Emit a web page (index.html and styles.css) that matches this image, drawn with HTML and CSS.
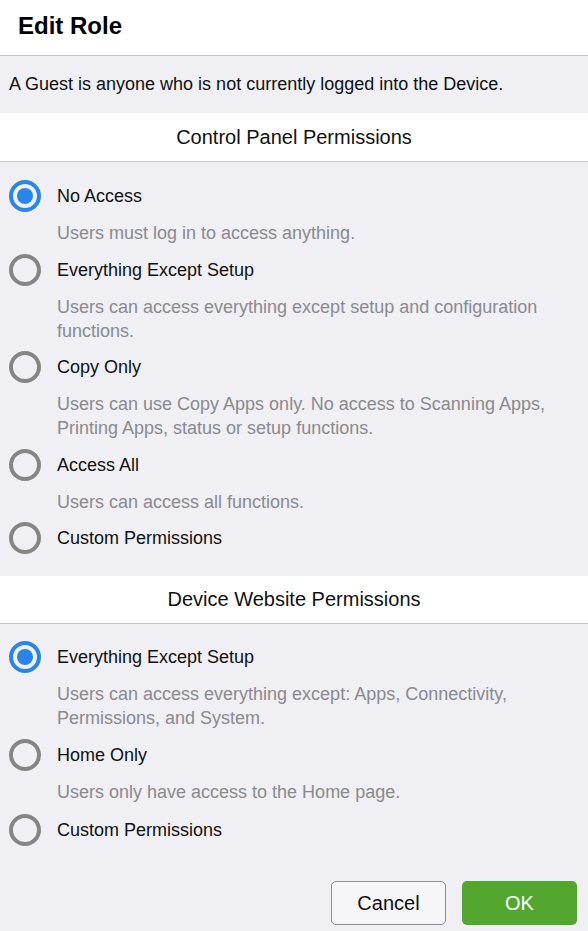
FILE: index.html
```html
<!DOCTYPE html>
<html lang="en">
<head>
<meta charset="utf-8">
<title>Edit Role</title>
<link rel="stylesheet" href="styles.css">
</head>
<body>
<div class="page">
  <header class="header"><h1 class="title">Edit Role</h1></header>
  <p class="intro">A Guest is anyone who is not currently logged into the Device.</p>

  <section class="section">
    <h2 class="section-title">Control Panel Permissions</h2>
    <div class="options">
      <div class="option">
        <div class="option-row"><span class="radio checked"></span><span class="label">No Access</span></div>
        <p class="desc">Users must log in to access anything.</p>
      </div>
      <div class="option">
        <div class="option-row"><span class="radio"></span><span class="label">Everything Except Setup</span></div>
        <p class="desc">Users can access everything except setup and configuration functions.</p>
      </div>
      <div class="option">
        <div class="option-row"><span class="radio"></span><span class="label">Copy Only</span></div>
        <p class="desc">Users can use Copy Apps only. No access to Scanning Apps, Printing Apps, status or setup functions.</p>
      </div>
      <div class="option">
        <div class="option-row"><span class="radio"></span><span class="label">Access All</span></div>
        <p class="desc">Users can access all functions.</p>
      </div>
      <div class="option">
        <div class="option-row"><span class="radio"></span><span class="label">Custom Permissions</span></div>
      </div>
    </div>
  </section>

  <section class="section">
    <h2 class="section-title second">Device Website Permissions</h2>
    <div class="options second">
      <div class="option">
        <div class="option-row"><span class="radio checked"></span><span class="label">Everything Except Setup</span></div>
        <p class="desc">Users can access everything except: Apps, Connectivity, Permissions, and System.</p>
      </div>
      <div class="option">
        <div class="option-row"><span class="radio"></span><span class="label">Home Only</span></div>
        <p class="desc">Users only have access to the Home page.</p>
      </div>
      <div class="option">
        <div class="option-row"><span class="radio"></span><span class="label">Custom Permissions</span></div>
      </div>
    </div>
  </section>

  <footer class="footer">
    <button class="btn btn-cancel">Cancel</button>
    <button class="btn btn-ok">OK</button>
  </footer>
</div>
</body>
</html>
```

FILE: styles.css
```css
* { box-sizing: border-box; }
html, body {
  margin: 0;
  padding: 0;
  background: #efeff4;
}
body {
  font-family: "Liberation Sans", Arial, sans-serif;
  color: #111;
  width: 588px;
  height: 931px;
  overflow: hidden;
}
.page {
  display: flex;
  flex-direction: column;
}
.header {
  background: #fff;
  height: 56px;
  border-bottom: 1px solid #c8c8cc;
  display: flex;
  align-items: center;
  padding: 0 18px;
}
.title {
  margin: 0;
  font-size: 24px;
  font-weight: bold;
  line-height: 28px;
  color: #000;
  padding-bottom: 4px;
}
.intro {
  margin: 0;
  padding: 17px 9px 18px;
  font-size: 18px;
  line-height: 22px;
  color: #111;
}
.section-title {
  margin: 0;
  background: #fff;
  height: 49px;
  border-bottom: 1px solid #c8c8cc;
  font-size: 20px;
  font-weight: normal;
  line-height: 48px;
  text-align: center;
  color: #111;
}
.section-title.second {
  height: 48px;
  line-height: 47px;
}
.options {
  padding: 18px 9px 13px;
}
.options.second {
  padding-top: 17px;
}
.option {
  margin-bottom: 8.5px;
}
.options.second .option {
  margin-bottom: 9.5px;
}
.option-row {
  display: flex;
  align-items: center;
  gap: 16px;
  height: 32px;
}
.radio {
  width: 32px;
  height: 32px;
  border: 4px solid #858585;
  border-radius: 50%;
  flex: none;
  display: flex;
  align-items: center;
  justify-content: center;
}
.radio.checked {
  border-color: #2a85e8;
}
.radio.checked::after {
  content: "";
  width: 16px;
  height: 16px;
  border-radius: 50%;
  background: #2a85e8;
}
.label {
  font-size: 18px;
  line-height: 24px;
  color: #111;
}
.desc {
  margin: 9px 0 0 48px;
  font-size: 18px;
  line-height: 24px;
  color: #8a8a8e;
}
.footer {
  display: flex;
  justify-content: flex-end;
  gap: 16px;
  padding: 13px 11px 0;
}
.btn {
  width: 115px;
  height: 44px;
  border-radius: 5px;
  font-family: "Liberation Sans", Arial, sans-serif;
  font-size: 20px;
  cursor: pointer;
}
.btn-cancel {
  background: #f6f6f8;
  border: 1px solid #8e8e92;
  color: #111;
}
.btn-ok {
  background: #53a72f;
  border: none;
  color: #fff;
}
```
